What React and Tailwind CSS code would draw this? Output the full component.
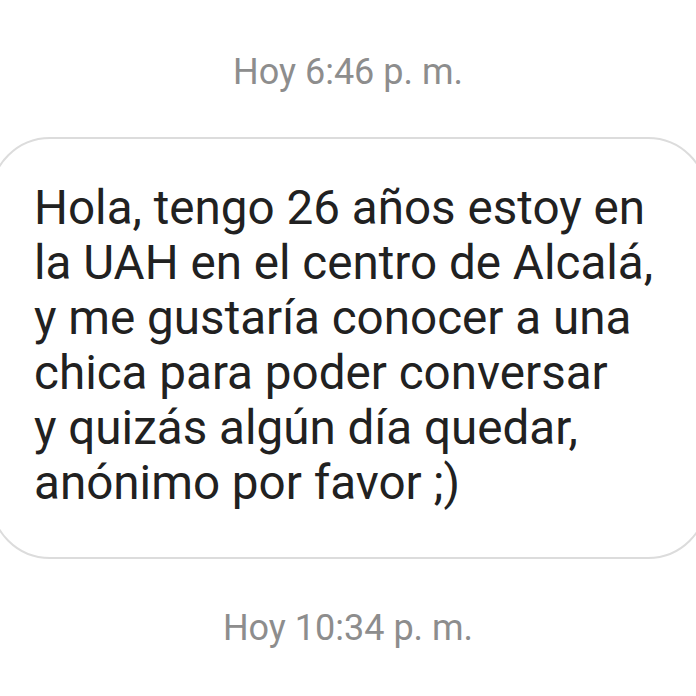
import React from 'react';

const lines = [
  'Hola, tengo 26 años estoy en',
  'la UAH en el centro de Alcalá,',
  'y me gustaría conocer a una',
  'chica para poder conversar',
  'y quizás algún día quedar,',
  'anónimo por favor ;)',
];

function Stamp({ children, className }) {
  return (
    <p className={`text-center text-[36px] leading-[40px] text-[#8d8d8d] ${className}`}>
      {children}
    </p>
  );
}

export default function App() {
  return (
    <div className="w-[696px] h-[696px] overflow-hidden bg-white font-['Roboto',sans-serif]">
      <Stamp className="pt-[52px]">Hoy 6:46 p. m.</Stamp>

      {/* message bubble, runs slightly past both edges */}
      <div className="ml-[-10px] mt-[45px] w-[718px] rounded-[60px] border-2 border-[#dcdcdc] pl-[42px] pt-[42px] pb-[46px]">
        {lines.map((line) => (
          <p key={line} className="whitespace-nowrap text-[47.6px] leading-[55px] text-[#212121]">
            {line}
          </p>
        ))}
      </div>

      <Stamp className="mt-[49px]">Hoy 10:34 p. m.</Stamp>
    </div>
  );
}
